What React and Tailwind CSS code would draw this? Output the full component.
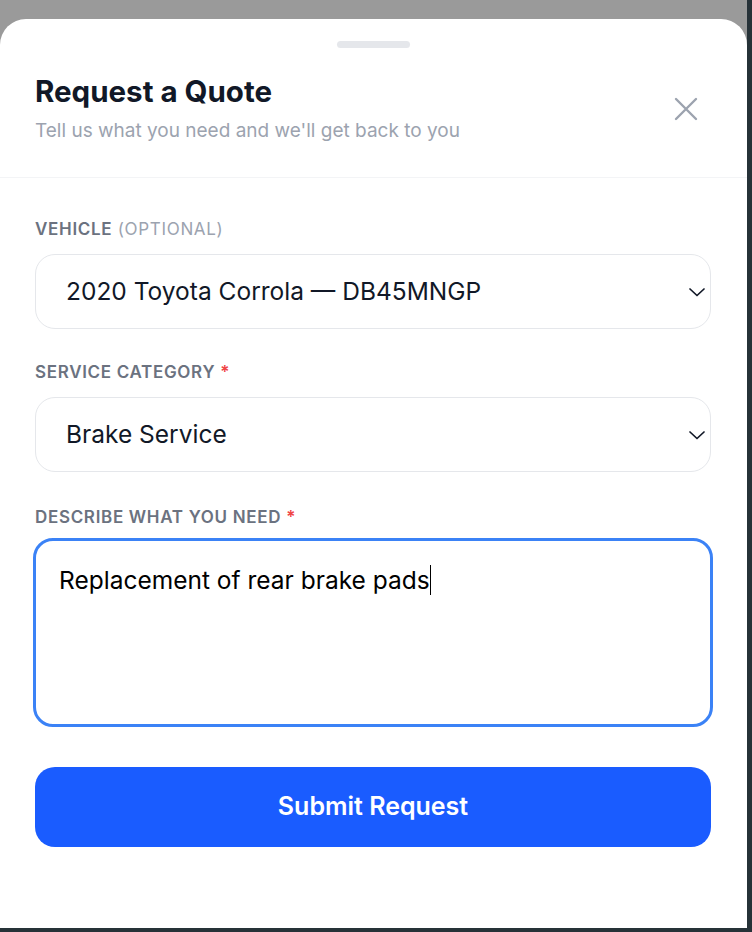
import React from 'react'

function Chevron() {
  return (
    <svg
      className="pointer-events-none absolute right-[5px] top-1/2 -translate-y-1/2"
      width="18"
      height="10"
      viewBox="0 0 18 10"
      fill="none"
    >
      <path d="M2 2l7 6.5L16 2" stroke="#111827" strokeWidth="1.7" strokeLinecap="round" strokeLinejoin="round" />
    </svg>
  )
}

function Label({ children, required, hint }) {
  return (
    <label className="block text-[17px] leading-[20px] font-semibold uppercase tracking-[0.04em] text-[#6b7280]">
      {children}
      {hint && <span className="font-normal text-[#9ca3af]"> {hint}</span>}
      {required && <span className="text-[#ef4444]"> *</span>}
    </label>
  )
}

function SelectField({ value, options }) {
  return (
    <div className="relative mt-[15px]">
      <select
        defaultValue={value}
        className="w-full h-[75px] appearance-none rounded-[20px] border-[1.5px] border-[#e5e7eb] bg-white pl-[30px] pr-10 text-[24.5px] text-[#111827] outline-none"
      >
        {options.map((o) => (
          <option key={o}>{o}</option>
        ))}
      </select>
      <Chevron />
    </div>
  )
}

export default function App() {
  return (
    <div className="w-[752px] h-[932px] bg-[#263238] pr-[5px] pb-[4px] font-['Inter','Liberation_Sans',sans-serif]">
      <div className="h-full bg-[#9a9a9a] pt-[19px] flex flex-col">
        <div className="flex-1 bg-white rounded-t-[26px] pt-[22px]">
          {/* Handle */}
          <div className="mx-auto w-[73px] h-[7px] rounded-full bg-[#e5e7eb]" />

          {/* Header */}
          <div className="flex items-start justify-between px-[35px] pt-[26px] pb-[34px] border-b border-[#f3f4f6]">
            <div>
              <h1 className="text-[29.5px] leading-[34px] font-bold text-[#111827]">Request a Quote</h1>
              <p className="mt-[11px] text-[19px] leading-[24px] text-[#9ca3af]">
                Tell us what you need and we'll get back to you
              </p>
            </div>
            <button className="mt-[23px] mr-[14px] text-[#9ca3af]">
              <svg width="24" height="24" viewBox="0 0 24 24" fill="none">
                <path d="M2 2l20 20M22 2L2 22" stroke="currentColor" strokeWidth="2.4" strokeLinecap="round" />
              </svg>
            </button>
          </div>

          {/* Form */}
          <div className="px-[35px] pt-[41px] pr-[36px]">
            <Label hint="(OPTIONAL)">Vehicle</Label>
            <SelectField
              value="2020 Toyota Corrola — DB45MNGP"
              options={['2020 Toyota Corrola — DB45MNGP']}
            />

            <div className="mt-[33px]">
              <Label required>Service Category</Label>
              <SelectField value="Brake Service" options={['Brake Service', 'Oil Change', 'Tyres']} />
            </div>

            <div className="mt-[35px]">
              <Label required>Describe what you need</Label>
              <div className="-mx-[2px] mt-[11px] h-[189px] rounded-[20px] border-[3px] border-[#3b82f6] pl-[23px] pt-[24px] text-[24.5px] leading-[30px] text-black">
                Replacement of rear brake pads
                <span className="inline-block w-[1.5px] h-[30px] bg-black align-top" />
              </div>
            </div>

            <button className="mt-[40px] w-full h-[80px] rounded-[20px] bg-[#1a5cff] text-[25px] font-semibold text-white">
              Submit Request
            </button>
          </div>
        </div>
      </div>
    </div>
  )
}
